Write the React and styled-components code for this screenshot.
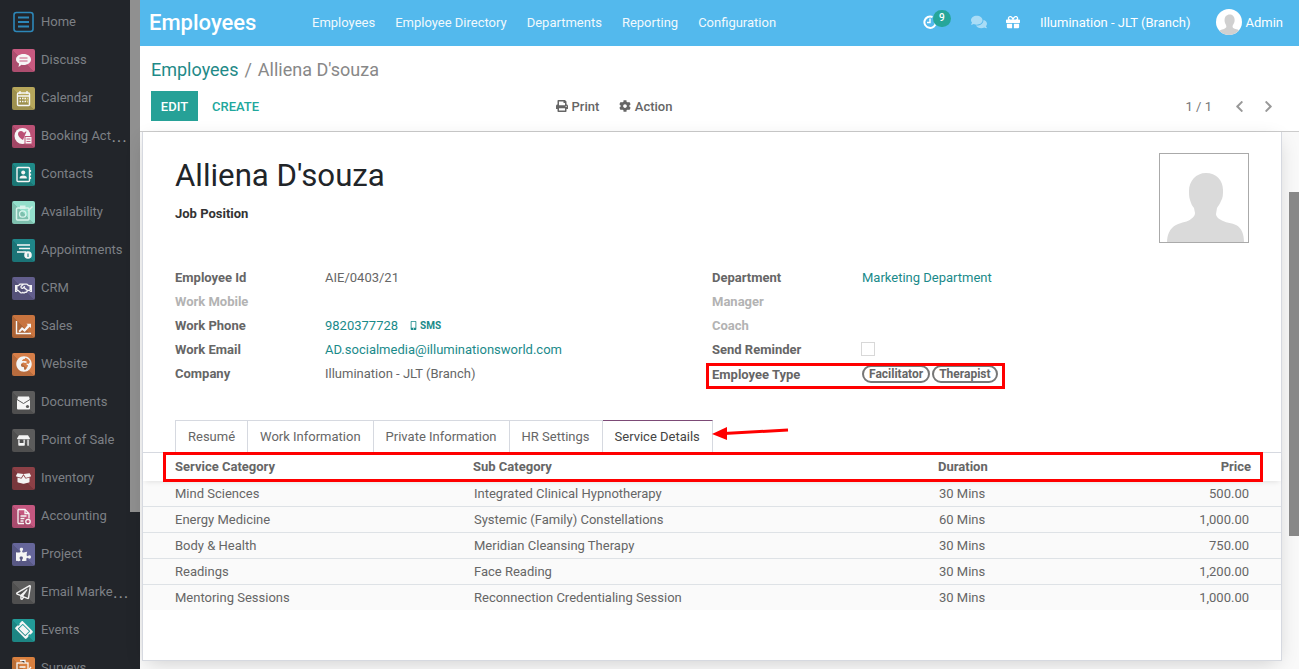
import React from 'react';
import styled, {createGlobalStyle} from 'styled-components';
import {
  FaGlobeAfrica, FaRegHandshake, FaStoreAlt, FaBoxOpen,
  FaPuzzlePiece, FaRegPaperPlane, FaTicketAlt, FaComments, FaGift, FaPrint, FaCog,
  FaChevronLeft, FaChevronRight, FaMobileAlt,
} from 'react-icons/fa';

const Global = createGlobalStyle`
  html, body { margin: 0; padding: 0; height: 100%; overflow: hidden; }
  body { font-family: Roboto, "Liberation Sans", sans-serif; font-size: 13px; color: #666; background: #fff; }
`;

const Page = styled.div`
  display: flex;
  width: 1299px;
  height: 669px;
  overflow: hidden;
`;

const Sidebar = styled.aside`
  display: flex;
  width: 140px;
  flex: none;
  background: #22252a;
`;

const Menu = styled.nav`
  width: 130px;
  flex: none;
  padding-top: 3px;
`;

const MenuItem = styled.div`
  display: flex;
  align-items: center;
  height: 38px;
  padding-left: 12px;
  gap: 6px;
  color: #7d8085;
`;

const MenuLabel = styled.span`
  white-space: nowrap;
  line-height: 18px;
`;

const Dots = styled.span`
  margin-left: 1px;
  letter-spacing: 1.9px;
  font-weight: 700;
  font-size: 12px;
  position: relative;
  top: 2px;
  color: #8d9094;
`;

const Tile = styled.span`
  display: flex;
  align-items: center;
  justify-content: center;
  width: 23px;
  height: 23px;
  flex: none;
  border-radius: 2px;
  color: #f4f4f4;
  font-size: ${p => p.$size || 14}px;
  background: linear-gradient(45deg, rgba(0,0,0,.14) 50%, rgba(255,255,255,0) 50%), ${p => p.$bg};
  svg { transform: rotate(${p => p.$turn || 0}deg); }
`;

const Glyph = styled.svg`
  width: 23px;
  height: 23px;
  flex: none;
`;

const SideRail = styled.div`
  width: 10px;
  flex: none;
`;

const SideThumb = styled.div`
  height: 512px;
  background: #909090;
`;

const Main = styled.div`
  display: flex;
  flex-direction: column;
  flex: 1;
  min-width: 0;
`;

const TopBar = styled.header`
  display: flex;
  align-items: center;
  box-sizing: border-box;
  height: 46px;
  flex: none;
  padding: 0 16px 2px 9px;
  background: #53b9ed;
  color: #fff;
`;

const Brand = styled.div`
  width: 163px;
  font-size: 22px;
  font-weight: 500;
`;

const NavLink = styled.a`
  margin-right: 20px;
  color: #fff;
  opacity: .92;
`;

const TopRight = styled.div`
  display: flex;
  align-items: center;
  margin-left: auto;
`;

const ActivityIcon = styled.span`
  position: relative;
  display: flex;
  width: 14px;
  margin-right: 34px;
`;

const Badge = styled.span`
  position: absolute;
  left: 10px;
  top: -5px;
  width: 18px;
  height: 17px;
  border-radius: 9px;
  background: #26a69a;
  font-size: 10px;
  font-weight: 500;
  line-height: 15px;
  text-align: center;
`;

const BarIcon = styled.span`
  display: flex;
  font-size: ${p => p.$size}px;
  opacity: ${p => p.$dim ? .5 : 1};
  margin-right: ${p => p.$gap}px;
`;

const Avatar = styled.span`
  display: block;
  width: 26px;
  height: 26px;
  margin: 0 3px 0 0;
  border-radius: 50%;
  background: #fff;
  overflow: hidden;
`;

const Company = styled.span`
  margin-right: 26px;
`;

const ControlPanel = styled.div`
  height: 85px;
  flex: none;
  padding: 0 24px 0 11px;
  border-bottom: 1px solid #ccc;
  background: #fff;
`;

const Breadcrumb = styled.div`
  display: flex;
  gap: 6px;
  height: 45px;
  align-items: center;
  padding-top: 2px;
  box-sizing: border-box;
  font-size: 18px;
  color: #888;
`;

const Crumb = styled.a`
  color: #1f8a88;
`;

const Buttons = styled.div`
  display: grid;
  grid-template-columns: 405px 1fr auto;
  align-items: center;
`;

const Left = styled.div`
  display: flex;
  align-items: center;
`;

const PrimaryBtn = styled.button`
  width: 47px;
  height: 30px;
  padding: 0;
  border: 0;
  background: #26a197;
  color: #fff;
  font: 500 13px Roboto, sans-serif;
`;

const LinkBtn = styled.button`
  height: 30px;
  margin-left: 14px;
  padding: 0;
  border: 0;
  background: none;
  color: #21a79c;
  font: 500 13px Roboto, sans-serif;
`;

const Sidebtn = styled.span`
  display: inline-flex;
  align-items: center;
  gap: 3.5px;
  margin-right: 20px;
  font-weight: 500;
  color: #666;
  font-size: 13px;
`;

const Pager = styled.div`
  display: flex;
  align-items: center;
  color: #777;
`;

const PagerIcon = styled.span`
  display: flex;
  margin-left: ${p => p.$gap}px;
  color: #999;
  font-size: 13px;
`;

const Body = styled.div`
  display: flex;
  flex: 1;
  min-height: 0;
  background: #f9f9f9;
`;

const Sheet = styled.section`
  width: 1138px;
  height: 528px;
  flex: none;
  margin-left: 2px;
  border: 1px solid #d6d9e0;
  border-top: 0;
  background: #fff;
  box-shadow: 0 5px 20px -5px rgba(0,0,0,.2);
`;

const Head = styled.div`
  display: flex;
  justify-content: space-between;
  height: 112px;
  padding: 21px 32px 0;
`;

const Name = styled.h1`
  margin: 1px 0 0;
  font-size: 31.2px;
  font-weight: 400;
  line-height: 43px;
  color: #212529;
`;

const JobPosition = styled.div`
  margin-top: 9px;
  font-size: 13px;
  line-height: 15px;
  font-weight: 700;
  color: #333;
`;

const Photo = styled.div`
  width: 88px;
  height: 88px;
  border: 1px solid #aaa;
  background: #fff;
`;

const Fields = styled.div`
  display: grid;
  grid-template-columns: 537px 1fr;
  padding: 0 32px;
`;

const FieldRow = styled.div`
  position: relative;
  display: flex;
  align-items: center;
  height: ${p => p.$tall ? 26 : 24}px;
`;

const Label = styled.span`
  width: 150px;
  flex: none;
  font-weight: 700;
  color: ${p => p.$muted ? '#b3b3b3' : '#666'};
`;

const Value = styled.span`
  color: ${p => p.$link ? '#1a8a8a' : '#666'};
`;

const SmsLink = styled.span`
  display: inline-flex;
  align-items: center;
  gap: 2px;
  margin-left: 11px;
  font-size: 10px;
  font-weight: 700;
  color: #1a8a8a;
`;

const Checkbox = styled.span`
  display: block;
  width: 12px;
  height: 12px;
  margin-left: -1px;
  border: 1px solid #d8d8d8;
`;

const Pill = styled.span`
  display: inline-block;
  margin-right: 2px;
  padding: 0 5px;
  height: 14px;
  border: 2px solid #777;
  border-radius: 10px;
  font-size: 12px;
  font-weight: 700;
  line-height: 14px;
  color: #666;
`;

const Highlight = styled.span`
  position: absolute;
  border: 3px solid #f00;
  pointer-events: none;
  left: ${p => p.$l}px;
  right: ${p => p.$r}px;
  top: ${p => p.$t}px;
  bottom: ${p => p.$b}px;
`;

const TabBar = styled.div`
  position: relative;
  display: flex;
  height: 32px;
  margin-top: 33px;
  padding-left: 32px;
  border-bottom: 1px solid #d6d9e0;
`;

const Tab = styled.div`
  height: 31px;
  padding: 0 12px;
  line-height: 32px;
  border: 1px solid #d6d9e0;
  border-left: ${p => p.$first ? '1px solid #d6d9e0' : '0'};
  border-bottom: 0;
  border-top: 1px solid ${p => p.$active ? '#7c4a76' : '#d6d9e0'};
  color: ${p => p.$active ? '#444' : '#666'};
  background: #fff;
`;

const Arrow = styled.svg`
  position: absolute;
  left: 569px;
  top: 2px;
  width: 78px;
  height: 20px;
`;

const TableRow = styled.div`
  position: relative;
  display: grid;
  grid-template-columns: 299px 465px 1fr auto;
  align-items: center;
  height: 25px;
  padding: 0 32px;
  background: #fafafa;
  border-bottom: ${p => p.$last ? 0 : '1px solid #dee2e6'};
  color: #666;
`;

const HeadRow = styled(TableRow)`
  grid-template-columns: 298px 465px 1fr auto;
  height: 26px;
  padding: 0 30px 2px 32px;
  background: #fff;
  border-bottom: 0;
  font-weight: 700;
  box-shadow: 0 3px 5px -2px rgba(0,0,0,.1);
  z-index: 1;
`;

const Right = styled.span`
  text-align: right;
`;

const Rail = styled.div`
  width: 10px;
  margin-left: auto;
  flex: none;
`;

const RailThumb = styled.div`
  height: 344px;
  margin-top: 60px;
  background: #888;
`;

// the app tiles that no icon package has in this outline style
const Bubble = () => (
  <Glyph viewBox="0 0 23 23">
    <path fill="#f6f6f6" d="M11.5 5c4.4 0 7.5 2.4 7.5 5.5S15.9 16 11.5 16c-.7 0-1.3 0-2-.2L6.5 18l.6-3.5C5.2 13.5 4 12.1 4 10.5 4 7.4 7.1 5 11.5 5z" />
    <path stroke="#c85a80" strokeWidth="1.2" d="M7.5 9h8M7.5 12h8" />
  </Glyph>
);

const Cal = () => (
  <Glyph viewBox="0 0 23 23">
    <rect x="5.5" y="6" width="12" height="12.5" rx="1" fill="none" stroke="#f6f6f6" strokeWidth="1.4" />
    <path stroke="#f6f6f6" strokeWidth="1.4" d="M8 4v3M15 4v3M5.5 9h12" />
    <path stroke="#f6f6f6" strokeWidth="1.5" strokeDasharray="1.5 1" d="M7.5 11.5h8M7.5 14.5h8" />
  </Glyph>
);

const Booking = () => (
  <Glyph viewBox="0 0 23 23">
    <circle cx="10.5" cy="11" r="8" fill="#f6f6f6" />
    <path fill="#bb5175" d="M9 6c1.5 0 2.5 1 3 2 .6-1 1.5-1.6 2.5-1.5L11 15c-2-1-5-3.5-5-6 0-1.8 1.3-3 3-3z" />
    <rect x="13" y="11.5" width="7" height="7.5" fill="#f6f6f6" stroke="#bb5175" strokeWidth="1" />
    <path stroke="#bb5175" strokeWidth=".9" d="M14.5 14h4M14.5 16.5h4" />
  </Glyph>
);

const Book = () => (
  <Glyph viewBox="0 0 23 23">
    <rect x="5" y="4.5" width="12.5" height="14" rx="1" fill="none" stroke="#f6f6f6" strokeWidth="1.4" />
    <path stroke="#f6f6f6" strokeWidth="1.2" d="M18.5 7v2M18.5 10.5v2M18.5 14v2" />
    <circle cx="11.2" cy="9.5" r="2" fill="#f6f6f6" />
    <path fill="#f6f6f6" d="M7.5 15.5c0-2.3 1.5-3 3.7-3s3.7.7 3.7 3z" />
  </Glyph>
);

const Clip = () => (
  <Glyph viewBox="0 0 23 23">
    <rect x="4.5" y="7" width="12.5" height="12" rx="1" fill="none" stroke="#d9f4ec" strokeWidth="1.5" />
    <rect x="8" y="4.5" width="5.5" height="3.5" fill="#d9f4ec" />
    <circle cx="10.7" cy="13" r="3.2" fill="none" stroke="#d9f4ec" strokeWidth="1.3" />
    <path stroke="#d9f4ec" strokeWidth="1.4" d="M16 10l4.5-4.5" />
  </Glyph>
);

const Slots = () => (
  <Glyph viewBox="0 0 23 23">
    <path stroke="#f6f6f6" strokeWidth="1.7" d="M5 6h13M7 9.5h11M5 13h9" />
    <circle cx="16" cy="16" r="3.8" fill="#f6f6f6" />
    <path stroke="#1f8689" strokeWidth="1.2" d="M16 14.5v3.5" />
  </Glyph>
);

const Trend = () => (
  <Glyph viewBox="0 0 23 23">
    <path fill="none" stroke="#f6f6f6" strokeWidth="1.4" d="M4.5 6v12.5H19" />
    <path fill="#f6f6f6" d="M6.5 16l3.5-4 2.5 2 3.3-4-1.3-1.3H19v4.3l-1.3-1.3-5 5.3-2.5-2-2.5 2.5z" />
  </Glyph>
);

const Cabinet = () => (
  <Glyph viewBox="0 0 23 23">
    <path fill="#f6f6f6" d="M5 9l1-3.5h11L18 9v8.5a1 1 0 0 1-1 1H6a1 1 0 0 1-1-1z" />
    <path fill="none" stroke="#5c5c5c" strokeWidth="1" d="M5 8.5l6.5 4 6.5-4" />
    <circle cx="15.5" cy="15.5" r="1.6" fill="#5c5c5c" />
  </Glyph>
);

const Ledger = () => (
  <Glyph viewBox="0 0 23 23">
    <path fill="none" stroke="#f6f6f6" strokeWidth="1.3" d="M6 4.5h7l4 4v5M13 4.5v4h4M12 18.5H6z" />
    <path stroke="#f6f6f6" strokeWidth="1.3" d="M6 4.5v14M8.5 11h6M8.5 13.5h4M8.5 16h3" />
    <circle cx="16" cy="16.5" r="2.2" fill="none" stroke="#f6f6f6" strokeWidth="1.3" />
  </Glyph>
);

const Survey = () => (
  <Glyph viewBox="0 0 23 23">
    <rect x="5" y="6" width="11" height="13" fill="none" stroke="#f6f6f6" strokeWidth="1.3" />
    <path stroke="#f6f6f6" strokeWidth="1.3" d="M8 3.5h5v2.5M7.5 10h6M7.5 13h6M14 16l5-6" />
  </Glyph>
);

const menu = [
  {label: 'Discuss', icon: Bubble, bg: '#c85a80'},
  {label: 'Calendar', icon: Cal, bg: '#b7a75b'},
  {label: 'Booking Act', more: true, icon: Booking, bg: '#bb5175'},
  {label: 'Contacts', icon: Book, bg: '#1f8a88'},
  {label: 'Availability', icon: Clip, bg: '#93dfcb'},
  {label: 'Appointments', icon: Slots, bg: '#1f8689'},
  {label: 'CRM', icon: FaRegHandshake, bg: '#625e8c', size: 17},
  {label: 'Sales', icon: Trend, bg: '#c8743f'},
  {label: 'Website', icon: FaGlobeAfrica, bg: '#d67e48', size: 16},
  {label: 'Documents', icon: Cabinet, bg: '#5c5c5c'},
  {label: 'Point of Sale', icon: FaStoreAlt, bg: '#5c5c5c', size: 13},
  {label: 'Inventory', icon: FaBoxOpen, bg: '#8c4046', size: 15},
  {label: 'Accounting', icon: Ledger, bg: '#c4577f'},
  {label: 'Project', icon: FaPuzzlePiece, bg: '#66669a', size: 15},
  {label: 'Email Marke', more: true, icon: FaRegPaperPlane, bg: '#5c5c5c', size: 15},
  {label: 'Events', icon: FaTicketAlt, bg: '#229b98', size: 16, turn: 45},
  {label: 'Surveys', icon: Survey, bg: '#d9803f'},
];

const nav = ['Employees', 'Employee Directory', 'Departments', 'Reporting', 'Configuration'];

const rows = [
  ['Mind Sciences', 'Integrated Clinical Hypnotherapy', '30 Mins', '500.00'],
  ['Energy Medicine', 'Systemic (Family) Constellations', '60 Mins', '1,000.00'],
  ['Body & Health', 'Meridian Cleansing Therapy', '30 Mins', '750.00'],
  ['Readings', 'Face Reading', '30 Mins', '1,200.00'],
  ['Mentoring Sessions', 'Reconnection Credentialing Session', '30 Mins', '1,000.00'],
];

const Silhouette = ({color}) => (
  <svg viewBox="0 0 88 88" width="100%" height="100%">
    <path fill={color} d="M46 19c10 0 17 7 17 17 0 4 0 8-2 11-1 3-3 5-4 7l-1 6c0 3 3 5 7 7 4 2 9 2 13 4 6 3 8 10 8 17H7c0-7 3-14 9-17 6-3 12-3 15-6 3-2 4-4 4-6l-1-5c-2-2-3-5-4-8-1-3-1-6-1-9 0-10 7-18 17-18z" />
  </svg>
);

const ClockMark = () => (
  <svg viewBox="0 0 14 14" width="14" height="14">
    <path fill="none" stroke="#fff" strokeWidth="2" d="M9.5 2A5.7 5.7 0 1 0 12.8 7" />
    <path fill="none" stroke="#fff" strokeWidth="1.4" d="M7 3.5V7.5H4" />
  </svg>
);

export default function App() {
  return (
    <Page>
      <Global />
      <Sidebar>
        <Menu>
          <MenuItem>
            <Glyph viewBox="0 0 23 23">
              <rect x="2" y="1.5" width="19" height="19" rx="2.5" fill="none" stroke="#2d87b8" strokeWidth="1.6" />
              <path d="M6 6.5h11M6 11h11M6 15.5h11" stroke="#2d87b8" strokeWidth="1.8" />
            </Glyph>
            <MenuLabel>Home</MenuLabel>
          </MenuItem>
          {menu.map(({label, icon: Icon, bg, size, turn, more}) => (
            <MenuItem key={label}>
              <Tile $bg={bg} $size={size} $turn={turn}><Icon /></Tile>
              <MenuLabel>{label}{more && <Dots>...</Dots>}</MenuLabel>
            </MenuItem>
          ))}
        </Menu>
        <SideRail><SideThumb /></SideRail>
      </Sidebar>

      <Main>
        <TopBar>
          <Brand>Employees</Brand>
          {nav.map(n => <NavLink key={n}>{n}</NavLink>)}
          <TopRight>
            <ActivityIcon><ClockMark /><Badge>9</Badge></ActivityIcon>
            <BarIcon $size={16} $dim $gap={19}><FaComments /></BarIcon>
            <BarIcon $size={14} $gap={20}><FaGift /></BarIcon>
            <Company>Illumination - JLT (Branch)</Company>
            <Avatar><Silhouette color="#d0d0d0" /></Avatar>
            Admin
          </TopRight>
        </TopBar>

        <ControlPanel>
          <Breadcrumb>
            <Crumb>Employees</Crumb>
            <span>/</span>
            <span>Alliena D'souza</span>
          </Breadcrumb>
          <Buttons>
            <Left>
              <PrimaryBtn>EDIT</PrimaryBtn>
              <LinkBtn>CREATE</LinkBtn>
            </Left>
            <Left>
              <Sidebtn><FaPrint size={12} />Print</Sidebtn>
              <Sidebtn><FaCog size={12} />Action</Sidebtn>
            </Left>
            <Pager>
              1 / 1
              <PagerIcon $gap={21}><FaChevronLeft /></PagerIcon>
              <PagerIcon $gap={16}><FaChevronRight /></PagerIcon>
            </Pager>
          </Buttons>
        </ControlPanel>

        <Body>
          <Sheet>
            <Head>
              <div>
                <Name>Alliena D'souza</Name>
                <JobPosition>Job Position</JobPosition>
              </div>
              <Photo><Silhouette color="#dadada" /></Photo>
            </Head>

            <Fields>
              <div>
                <FieldRow><Label>Employee Id</Label><Value>AIE/0403/21</Value></FieldRow>
                <FieldRow><Label $muted>Work Mobile</Label></FieldRow>
                <FieldRow>
                  <Label>Work Phone</Label>
                  <Value $link>9820377728</Value>
                  <SmsLink><FaMobileAlt size={9} />SMS</SmsLink>
                </FieldRow>
                <FieldRow><Label>Work Email</Label><Value $link>AD.socialmedia@illuminationsworld.com</Value></FieldRow>
                <FieldRow><Label>Company</Label><Value>Illumination - JLT (Branch)</Value></FieldRow>
              </div>
              <div>
                <FieldRow><Label>Department</Label><Value $link>Marketing Department</Value></FieldRow>
                <FieldRow><Label $muted>Manager</Label></FieldRow>
                <FieldRow><Label $muted>Coach</Label></FieldRow>
                <FieldRow><Label>Send Reminder</Label><Checkbox /></FieldRow>
                <FieldRow $tall>
                  <Label>Employee Type</Label>
                  <Pill>Facilitator</Pill>
                  <Pill>Therapist</Pill>
                  <Highlight $l={-6} $r={244} $t={2} $b={-2} />
                </FieldRow>
              </div>
            </Fields>

            <TabBar>
              <Tab $first>Resumé</Tab>
              <Tab>Work Information</Tab>
              <Tab>Private Information</Tab>
              <Tab>HR Settings</Tab>
              <Tab $active>Service Details</Tab>
              <Arrow viewBox="0 0 78 20">
                <path d="M12 11.5 L76 8" stroke="#f00" strokeWidth="3" />
                <path d="M0 12 L15 5 L15 18z" fill="#f00" />
              </Arrow>
            </TabBar>

            <HeadRow>
              <span>Service Category</span>
              <span>Sub Category</span>
              <span>Duration</span>
              <Right>Price</Right>
              <Highlight $l={20} $r={18} $t={-1} $b={-1} />
            </HeadRow>
            {rows.map((r, i) => (
              <TableRow key={r[0]} $last={i === rows.length - 1}>
                <span>{r[0]}</span>
                <span>{r[1]}</span>
                <span>{r[2]}</span>
                <Right>{r[3]}</Right>
              </TableRow>
            ))}
          </Sheet>
          <Rail><RailThumb /></Rail>
        </Body>
      </Main>
    </Page>
  );
}
